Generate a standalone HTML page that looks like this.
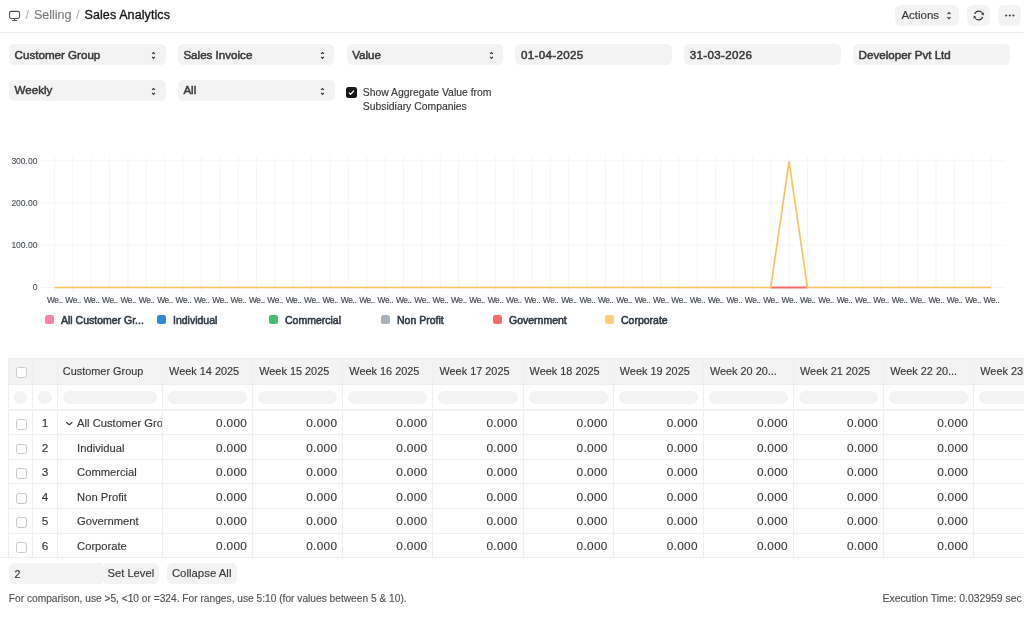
<!DOCTYPE html><html><head><meta charset="utf-8"><style>

*{box-sizing:border-box;margin:0;padding:0}
html,body{width:1024px;height:624px;overflow:hidden;background:#fff;font-family:"Liberation Sans", sans-serif;}
.abs{position:absolute;white-space:nowrap}
.inp{position:absolute;background:#f3f3f3;border-radius:5px;}
.t{position:absolute;white-space:nowrap;line-height:1;-webkit-text-stroke:0.15px currentColor}
.sb{-webkit-text-stroke:0.35px currentColor}

</style></head><body><div style="position:absolute;left:0;top:0;width:1024px;height:624px;will-change:transform">
<div class="abs" style="left:0;top:32px;width:1024px;height:1px;background:#ededed"></div>
<svg class="abs" style="left:0;top:0" width="30" height="30" viewBox="0 0 30 30" fill="none" stroke="#505050" stroke-width="1.05" stroke-linecap="round">
<rect x="9.5" y="11.35" width="10.05" height="7.1" rx="1.6"/><path d="M14.55 18.7V20.2M12.5 20.4H16.7"/></svg>
<div class="t" style="left:25.50px;top:9px;font-size:12.8px;color:#b8b8b8;">/</div>
<div class="t" style="left:34.00px;top:9px;font-size:12.5px;color:#7c7c7c;">Selling</div>
<div class="t" style="left:76.00px;top:9px;font-size:12.8px;color:#b8b8b8;">/</div>
<div class="t" style="left:84.50px;top:9px;font-size:12.5px;color:#171717;-webkit-text-stroke:0.35px #171717;letter-spacing:0.1px">Sales Analytics</div>
<div class="inp" style="left:895.2px;top:5.2px;width:63.6px;height:20.6px;border-radius:6px"></div>
<div class="t" style="left:901.40px;top:10px;font-size:11.5px;color:#383838;">Actions</div>
<svg class="abs" style="left:944.9px;top:11px" width="8" height="9" viewBox="0 0 8 9" fill="none" stroke="#383838" stroke-width="1.2"><path d="M2.5 3.1L4 1.6L5.5 3.1M2.5 6.2L4 7.7L5.5 6.2"/></svg>
<div class="inp" style="left:967px;top:5.2px;width:23.3px;height:20.6px;border-radius:6px"></div>
<svg class="abs" style="left:972px;top:9.3px" width="14" height="13" viewBox="0 0 14 13" fill="none" stroke="#383838" stroke-width="1.05"><path d="M2.57 5.00A4.4 4.4 0 0 1 10.69 4.64M10.83 8.00A4.4 4.4 0 0 1 2.71 8.36"/><path d="M11.53 6.45L12.06 3.56L8.98 5.00Z M1.87 6.55L1.34 9.44L4.42 8.00Z" fill="#383838" stroke="none"/></svg>
<div class="inp" style="left:998.1px;top:5.2px;width:23.1px;height:20.6px;border-radius:6px"></div>
<svg class="abs" style="left:1000px;top:10px" width="20" height="11" viewBox="0 0 20 11"><circle cx="6.2" cy="5.5" r="1.05" fill="#383838"/><circle cx="9.8" cy="5.5" r="1.05" fill="#383838"/><circle cx="13.4" cy="5.5" r="1.05" fill="#383838"/></svg>
<div class="inp" style="left:9.00px;top:44.1px;width:156.5px;height:20.9px"></div>
<div class="t" style="left:14.60px;top:49px;font-size:11.6px;color:#383838;-webkit-text-stroke:0.5px #383838">Customer Group</div>
<svg class="abs" style="left:150.00px;top:50.2px" width="8" height="10" viewBox="0 0 8 10" fill="none" stroke="#383838" stroke-width="1.2"><path d="M2.1 3.9L3.5 2.5L4.9 3.9M2.1 6.9L3.5 8.3L4.9 6.9"/></svg>
<div class="inp" style="left:177.80px;top:44.1px;width:156.5px;height:20.9px"></div>
<div class="t" style="left:183.40px;top:49px;font-size:11.6px;color:#383838;-webkit-text-stroke:0.5px #383838">Sales Invoice</div>
<svg class="abs" style="left:318.80px;top:50.2px" width="8" height="10" viewBox="0 0 8 10" fill="none" stroke="#383838" stroke-width="1.2"><path d="M2.1 3.9L3.5 2.5L4.9 3.9M2.1 6.9L3.5 8.3L4.9 6.9"/></svg>
<div class="inp" style="left:346.60px;top:44.1px;width:156.5px;height:20.9px"></div>
<div class="t" style="left:352.20px;top:49px;font-size:11.6px;color:#383838;-webkit-text-stroke:0.5px #383838">Value</div>
<svg class="abs" style="left:487.60px;top:50.2px" width="8" height="10" viewBox="0 0 8 10" fill="none" stroke="#383838" stroke-width="1.2"><path d="M2.1 3.9L3.5 2.5L4.9 3.9M2.1 6.9L3.5 8.3L4.9 6.9"/></svg>
<div class="inp" style="left:515.40px;top:44.1px;width:156.5px;height:20.9px"></div>
<div class="t" style="left:521.00px;top:49px;font-size:11.6px;color:#383838;-webkit-text-stroke:0.5px #383838;letter-spacing:0.33px">01-04-2025</div>
<div class="inp" style="left:684.20px;top:44.1px;width:156.5px;height:20.9px"></div>
<div class="t" style="left:689.80px;top:49px;font-size:11.6px;color:#383838;-webkit-text-stroke:0.5px #383838;letter-spacing:0.33px">31-03-2026</div>
<div class="inp" style="left:853.00px;top:44.1px;width:156.5px;height:20.9px"></div>
<div class="t" style="left:858.60px;top:49px;font-size:11.6px;color:#383838;-webkit-text-stroke:0.5px #383838">Developer Pvt Ltd</div>
<div class="inp" style="left:9.00px;top:80px;width:157px;height:20.5px"></div>
<div class="t" style="left:14.60px;top:84px;font-size:11.6px;color:#383838;-webkit-text-stroke:0.5px #383838">Weekly</div>
<svg class="abs" style="left:150.00px;top:85.8px" width="8" height="10" viewBox="0 0 8 10" fill="none" stroke="#383838" stroke-width="1.2"><path d="M2.1 3.9L3.5 2.5L4.9 3.9M2.1 6.9L3.5 8.3L4.9 6.9"/></svg>
<div class="inp" style="left:177.80px;top:80px;width:157px;height:20.5px"></div>
<div class="t" style="left:183.40px;top:84px;font-size:11.6px;color:#383838;-webkit-text-stroke:0.5px #383838">All</div>
<svg class="abs" style="left:318.80px;top:85.8px" width="8" height="10" viewBox="0 0 8 10" fill="none" stroke="#383838" stroke-width="1.2"><path d="M2.1 3.9L3.5 2.5L4.9 3.9M2.1 6.9L3.5 8.3L4.9 6.9"/></svg>
<div class="abs" style="left:346.2px;top:87.1px;width:10.5px;height:10.5px;border-radius:2.5px;background:#171717"></div>
<svg class="abs" style="left:346.2px;top:87.1px" width="11" height="11" viewBox="0 0 11 11" fill="none" stroke="#fff" stroke-width="1.3"><path d="M3 5.6L4.6 7.2L8 3.6"/></svg>
<div class="t" style="left:362.80px;top:88px;font-size:10.4px;color:#383838;">Show Aggregate Value from</div>
<div class="t" style="left:362.80px;top:102px;font-size:10.4px;color:#383838;">Subsidiary Companies</div>
<svg class="abs" style="left:0;top:0" width="1024" height="340" viewBox="0 0 1024 340"><line x1="41" y1="287.5" x2="1004.5" y2="287.5" stroke="#f4f5f6" stroke-width="1"/><line x1="41" y1="245.27" x2="1004.5" y2="245.27" stroke="#f4f5f6" stroke-width="1"/><line x1="41" y1="203.04000000000002" x2="1004.5" y2="203.04000000000002" stroke="#f4f5f6" stroke-width="1"/><line x1="41" y1="160.81" x2="1004.5" y2="160.81" stroke="#f4f5f6" stroke-width="1"/><line x1="54.50" y1="156.3" x2="54.50" y2="291.5" stroke="#f4f5f6" stroke-width="1"/><line x1="72.86" y1="156.3" x2="72.86" y2="291.5" stroke="#f4f5f6" stroke-width="1"/><line x1="91.23" y1="156.3" x2="91.23" y2="291.5" stroke="#f4f5f6" stroke-width="1"/><line x1="109.59" y1="156.3" x2="109.59" y2="291.5" stroke="#f4f5f6" stroke-width="1"/><line x1="127.96" y1="156.3" x2="127.96" y2="291.5" stroke="#f4f5f6" stroke-width="1"/><line x1="146.32" y1="156.3" x2="146.32" y2="291.5" stroke="#f4f5f6" stroke-width="1"/><line x1="164.69" y1="156.3" x2="164.69" y2="291.5" stroke="#f4f5f6" stroke-width="1"/><line x1="183.05" y1="156.3" x2="183.05" y2="291.5" stroke="#f4f5f6" stroke-width="1"/><line x1="201.42" y1="156.3" x2="201.42" y2="291.5" stroke="#f4f5f6" stroke-width="1"/><line x1="219.78" y1="156.3" x2="219.78" y2="291.5" stroke="#f4f5f6" stroke-width="1"/><line x1="238.15" y1="156.3" x2="238.15" y2="291.5" stroke="#f4f5f6" stroke-width="1"/><line x1="256.51" y1="156.3" x2="256.51" y2="291.5" stroke="#f4f5f6" stroke-width="1"/><line x1="274.88" y1="156.3" x2="274.88" y2="291.5" stroke="#f4f5f6" stroke-width="1"/><line x1="293.24" y1="156.3" x2="293.24" y2="291.5" stroke="#f4f5f6" stroke-width="1"/><line x1="311.61" y1="156.3" x2="311.61" y2="291.5" stroke="#f4f5f6" stroke-width="1"/><line x1="329.97" y1="156.3" x2="329.97" y2="291.5" stroke="#f4f5f6" stroke-width="1"/><line x1="348.34" y1="156.3" x2="348.34" y2="291.5" stroke="#f4f5f6" stroke-width="1"/><line x1="366.70" y1="156.3" x2="366.70" y2="291.5" stroke="#f4f5f6" stroke-width="1"/><line x1="385.06" y1="156.3" x2="385.06" y2="291.5" stroke="#f4f5f6" stroke-width="1"/><line x1="403.43" y1="156.3" x2="403.43" y2="291.5" stroke="#f4f5f6" stroke-width="1"/><line x1="421.79" y1="156.3" x2="421.79" y2="291.5" stroke="#f4f5f6" stroke-width="1"/><line x1="440.16" y1="156.3" x2="440.16" y2="291.5" stroke="#f4f5f6" stroke-width="1"/><line x1="458.52" y1="156.3" x2="458.52" y2="291.5" stroke="#f4f5f6" stroke-width="1"/><line x1="476.89" y1="156.3" x2="476.89" y2="291.5" stroke="#f4f5f6" stroke-width="1"/><line x1="495.25" y1="156.3" x2="495.25" y2="291.5" stroke="#f4f5f6" stroke-width="1"/><line x1="513.62" y1="156.3" x2="513.62" y2="291.5" stroke="#f4f5f6" stroke-width="1"/><line x1="531.98" y1="156.3" x2="531.98" y2="291.5" stroke="#f4f5f6" stroke-width="1"/><line x1="550.35" y1="156.3" x2="550.35" y2="291.5" stroke="#f4f5f6" stroke-width="1"/><line x1="568.71" y1="156.3" x2="568.71" y2="291.5" stroke="#f4f5f6" stroke-width="1"/><line x1="587.08" y1="156.3" x2="587.08" y2="291.5" stroke="#f4f5f6" stroke-width="1"/><line x1="605.44" y1="156.3" x2="605.44" y2="291.5" stroke="#f4f5f6" stroke-width="1"/><line x1="623.81" y1="156.3" x2="623.81" y2="291.5" stroke="#f4f5f6" stroke-width="1"/><line x1="642.17" y1="156.3" x2="642.17" y2="291.5" stroke="#f4f5f6" stroke-width="1"/><line x1="660.54" y1="156.3" x2="660.54" y2="291.5" stroke="#f4f5f6" stroke-width="1"/><line x1="678.90" y1="156.3" x2="678.90" y2="291.5" stroke="#f4f5f6" stroke-width="1"/><line x1="697.26" y1="156.3" x2="697.26" y2="291.5" stroke="#f4f5f6" stroke-width="1"/><line x1="715.63" y1="156.3" x2="715.63" y2="291.5" stroke="#f4f5f6" stroke-width="1"/><line x1="733.99" y1="156.3" x2="733.99" y2="291.5" stroke="#f4f5f6" stroke-width="1"/><line x1="752.36" y1="156.3" x2="752.36" y2="291.5" stroke="#f4f5f6" stroke-width="1"/><line x1="770.72" y1="156.3" x2="770.72" y2="291.5" stroke="#f4f5f6" stroke-width="1"/><line x1="789.09" y1="156.3" x2="789.09" y2="291.5" stroke="#f4f5f6" stroke-width="1"/><line x1="807.45" y1="156.3" x2="807.45" y2="291.5" stroke="#f4f5f6" stroke-width="1"/><line x1="825.82" y1="156.3" x2="825.82" y2="291.5" stroke="#f4f5f6" stroke-width="1"/><line x1="844.18" y1="156.3" x2="844.18" y2="291.5" stroke="#f4f5f6" stroke-width="1"/><line x1="862.55" y1="156.3" x2="862.55" y2="291.5" stroke="#f4f5f6" stroke-width="1"/><line x1="880.91" y1="156.3" x2="880.91" y2="291.5" stroke="#f4f5f6" stroke-width="1"/><line x1="899.28" y1="156.3" x2="899.28" y2="291.5" stroke="#f4f5f6" stroke-width="1"/><line x1="917.64" y1="156.3" x2="917.64" y2="291.5" stroke="#f4f5f6" stroke-width="1"/><line x1="936.01" y1="156.3" x2="936.01" y2="291.5" stroke="#f4f5f6" stroke-width="1"/><line x1="954.37" y1="156.3" x2="954.37" y2="291.5" stroke="#f4f5f6" stroke-width="1"/><line x1="972.74" y1="156.3" x2="972.74" y2="291.5" stroke="#f4f5f6" stroke-width="1"/><line x1="991.10" y1="156.3" x2="991.10" y2="291.5" stroke="#f4f5f6" stroke-width="1"/><text x="37.4" y="290.45" text-anchor="end" font-family="Liberation Sans" font-size="8.5" fill="#4a5057" stroke="#4a5057" stroke-width="0.12">0</text><text x="37.4" y="248.22" text-anchor="end" font-family="Liberation Sans" font-size="8.5" fill="#4a5057" stroke="#4a5057" stroke-width="0.12">100.00</text><text x="37.4" y="205.99" text-anchor="end" font-family="Liberation Sans" font-size="8.5" fill="#4a5057" stroke="#4a5057" stroke-width="0.12">200.00</text><text x="37.4" y="163.76" text-anchor="end" font-family="Liberation Sans" font-size="8.5" fill="#4a5057" stroke="#4a5057" stroke-width="0.12">300.00</text><text x="54.80" y="302.7" text-anchor="middle" font-family="Liberation Sans" font-size="8.4" letter-spacing="-0.35" fill="#40464d" stroke="#40464d" stroke-width="0.15">We..</text><text x="73.16" y="302.7" text-anchor="middle" font-family="Liberation Sans" font-size="8.4" letter-spacing="-0.35" fill="#40464d" stroke="#40464d" stroke-width="0.15">We..</text><text x="91.53" y="302.7" text-anchor="middle" font-family="Liberation Sans" font-size="8.4" letter-spacing="-0.35" fill="#40464d" stroke="#40464d" stroke-width="0.15">We..</text><text x="109.89" y="302.7" text-anchor="middle" font-family="Liberation Sans" font-size="8.4" letter-spacing="-0.35" fill="#40464d" stroke="#40464d" stroke-width="0.15">We..</text><text x="128.26" y="302.7" text-anchor="middle" font-family="Liberation Sans" font-size="8.4" letter-spacing="-0.35" fill="#40464d" stroke="#40464d" stroke-width="0.15">We..</text><text x="146.62" y="302.7" text-anchor="middle" font-family="Liberation Sans" font-size="8.4" letter-spacing="-0.35" fill="#40464d" stroke="#40464d" stroke-width="0.15">We..</text><text x="164.99" y="302.7" text-anchor="middle" font-family="Liberation Sans" font-size="8.4" letter-spacing="-0.35" fill="#40464d" stroke="#40464d" stroke-width="0.15">We..</text><text x="183.35" y="302.7" text-anchor="middle" font-family="Liberation Sans" font-size="8.4" letter-spacing="-0.35" fill="#40464d" stroke="#40464d" stroke-width="0.15">We..</text><text x="201.72" y="302.7" text-anchor="middle" font-family="Liberation Sans" font-size="8.4" letter-spacing="-0.35" fill="#40464d" stroke="#40464d" stroke-width="0.15">We..</text><text x="220.08" y="302.7" text-anchor="middle" font-family="Liberation Sans" font-size="8.4" letter-spacing="-0.35" fill="#40464d" stroke="#40464d" stroke-width="0.15">We..</text><text x="238.45" y="302.7" text-anchor="middle" font-family="Liberation Sans" font-size="8.4" letter-spacing="-0.35" fill="#40464d" stroke="#40464d" stroke-width="0.15">We..</text><text x="256.81" y="302.7" text-anchor="middle" font-family="Liberation Sans" font-size="8.4" letter-spacing="-0.35" fill="#40464d" stroke="#40464d" stroke-width="0.15">We..</text><text x="275.18" y="302.7" text-anchor="middle" font-family="Liberation Sans" font-size="8.4" letter-spacing="-0.35" fill="#40464d" stroke="#40464d" stroke-width="0.15">We..</text><text x="293.54" y="302.7" text-anchor="middle" font-family="Liberation Sans" font-size="8.4" letter-spacing="-0.35" fill="#40464d" stroke="#40464d" stroke-width="0.15">We..</text><text x="311.91" y="302.7" text-anchor="middle" font-family="Liberation Sans" font-size="8.4" letter-spacing="-0.35" fill="#40464d" stroke="#40464d" stroke-width="0.15">We..</text><text x="330.27" y="302.7" text-anchor="middle" font-family="Liberation Sans" font-size="8.4" letter-spacing="-0.35" fill="#40464d" stroke="#40464d" stroke-width="0.15">We..</text><text x="348.64" y="302.7" text-anchor="middle" font-family="Liberation Sans" font-size="8.4" letter-spacing="-0.35" fill="#40464d" stroke="#40464d" stroke-width="0.15">We..</text><text x="367.00" y="302.7" text-anchor="middle" font-family="Liberation Sans" font-size="8.4" letter-spacing="-0.35" fill="#40464d" stroke="#40464d" stroke-width="0.15">We..</text><text x="385.36" y="302.7" text-anchor="middle" font-family="Liberation Sans" font-size="8.4" letter-spacing="-0.35" fill="#40464d" stroke="#40464d" stroke-width="0.15">We..</text><text x="403.73" y="302.7" text-anchor="middle" font-family="Liberation Sans" font-size="8.4" letter-spacing="-0.35" fill="#40464d" stroke="#40464d" stroke-width="0.15">We..</text><text x="422.09" y="302.7" text-anchor="middle" font-family="Liberation Sans" font-size="8.4" letter-spacing="-0.35" fill="#40464d" stroke="#40464d" stroke-width="0.15">We..</text><text x="440.46" y="302.7" text-anchor="middle" font-family="Liberation Sans" font-size="8.4" letter-spacing="-0.35" fill="#40464d" stroke="#40464d" stroke-width="0.15">We..</text><text x="458.82" y="302.7" text-anchor="middle" font-family="Liberation Sans" font-size="8.4" letter-spacing="-0.35" fill="#40464d" stroke="#40464d" stroke-width="0.15">We..</text><text x="477.19" y="302.7" text-anchor="middle" font-family="Liberation Sans" font-size="8.4" letter-spacing="-0.35" fill="#40464d" stroke="#40464d" stroke-width="0.15">We..</text><text x="495.55" y="302.7" text-anchor="middle" font-family="Liberation Sans" font-size="8.4" letter-spacing="-0.35" fill="#40464d" stroke="#40464d" stroke-width="0.15">We..</text><text x="513.92" y="302.7" text-anchor="middle" font-family="Liberation Sans" font-size="8.4" letter-spacing="-0.35" fill="#40464d" stroke="#40464d" stroke-width="0.15">We..</text><text x="532.28" y="302.7" text-anchor="middle" font-family="Liberation Sans" font-size="8.4" letter-spacing="-0.35" fill="#40464d" stroke="#40464d" stroke-width="0.15">We..</text><text x="550.65" y="302.7" text-anchor="middle" font-family="Liberation Sans" font-size="8.4" letter-spacing="-0.35" fill="#40464d" stroke="#40464d" stroke-width="0.15">We..</text><text x="569.01" y="302.7" text-anchor="middle" font-family="Liberation Sans" font-size="8.4" letter-spacing="-0.35" fill="#40464d" stroke="#40464d" stroke-width="0.15">We..</text><text x="587.38" y="302.7" text-anchor="middle" font-family="Liberation Sans" font-size="8.4" letter-spacing="-0.35" fill="#40464d" stroke="#40464d" stroke-width="0.15">We..</text><text x="605.74" y="302.7" text-anchor="middle" font-family="Liberation Sans" font-size="8.4" letter-spacing="-0.35" fill="#40464d" stroke="#40464d" stroke-width="0.15">We..</text><text x="624.11" y="302.7" text-anchor="middle" font-family="Liberation Sans" font-size="8.4" letter-spacing="-0.35" fill="#40464d" stroke="#40464d" stroke-width="0.15">We..</text><text x="642.47" y="302.7" text-anchor="middle" font-family="Liberation Sans" font-size="8.4" letter-spacing="-0.35" fill="#40464d" stroke="#40464d" stroke-width="0.15">We..</text><text x="660.84" y="302.7" text-anchor="middle" font-family="Liberation Sans" font-size="8.4" letter-spacing="-0.35" fill="#40464d" stroke="#40464d" stroke-width="0.15">We..</text><text x="679.20" y="302.7" text-anchor="middle" font-family="Liberation Sans" font-size="8.4" letter-spacing="-0.35" fill="#40464d" stroke="#40464d" stroke-width="0.15">We..</text><text x="697.56" y="302.7" text-anchor="middle" font-family="Liberation Sans" font-size="8.4" letter-spacing="-0.35" fill="#40464d" stroke="#40464d" stroke-width="0.15">We..</text><text x="715.93" y="302.7" text-anchor="middle" font-family="Liberation Sans" font-size="8.4" letter-spacing="-0.35" fill="#40464d" stroke="#40464d" stroke-width="0.15">We..</text><text x="734.29" y="302.7" text-anchor="middle" font-family="Liberation Sans" font-size="8.4" letter-spacing="-0.35" fill="#40464d" stroke="#40464d" stroke-width="0.15">We..</text><text x="752.66" y="302.7" text-anchor="middle" font-family="Liberation Sans" font-size="8.4" letter-spacing="-0.35" fill="#40464d" stroke="#40464d" stroke-width="0.15">We..</text><text x="771.02" y="302.7" text-anchor="middle" font-family="Liberation Sans" font-size="8.4" letter-spacing="-0.35" fill="#40464d" stroke="#40464d" stroke-width="0.15">We..</text><text x="789.39" y="302.7" text-anchor="middle" font-family="Liberation Sans" font-size="8.4" letter-spacing="-0.35" fill="#40464d" stroke="#40464d" stroke-width="0.15">We..</text><text x="807.75" y="302.7" text-anchor="middle" font-family="Liberation Sans" font-size="8.4" letter-spacing="-0.35" fill="#40464d" stroke="#40464d" stroke-width="0.15">We..</text><text x="826.12" y="302.7" text-anchor="middle" font-family="Liberation Sans" font-size="8.4" letter-spacing="-0.35" fill="#40464d" stroke="#40464d" stroke-width="0.15">We..</text><text x="844.48" y="302.7" text-anchor="middle" font-family="Liberation Sans" font-size="8.4" letter-spacing="-0.35" fill="#40464d" stroke="#40464d" stroke-width="0.15">We..</text><text x="862.85" y="302.7" text-anchor="middle" font-family="Liberation Sans" font-size="8.4" letter-spacing="-0.35" fill="#40464d" stroke="#40464d" stroke-width="0.15">We..</text><text x="881.21" y="302.7" text-anchor="middle" font-family="Liberation Sans" font-size="8.4" letter-spacing="-0.35" fill="#40464d" stroke="#40464d" stroke-width="0.15">We..</text><text x="899.58" y="302.7" text-anchor="middle" font-family="Liberation Sans" font-size="8.4" letter-spacing="-0.35" fill="#40464d" stroke="#40464d" stroke-width="0.15">We..</text><text x="917.94" y="302.7" text-anchor="middle" font-family="Liberation Sans" font-size="8.4" letter-spacing="-0.35" fill="#40464d" stroke="#40464d" stroke-width="0.15">We..</text><text x="936.31" y="302.7" text-anchor="middle" font-family="Liberation Sans" font-size="8.4" letter-spacing="-0.35" fill="#40464d" stroke="#40464d" stroke-width="0.15">We..</text><text x="954.67" y="302.7" text-anchor="middle" font-family="Liberation Sans" font-size="8.4" letter-spacing="-0.35" fill="#40464d" stroke="#40464d" stroke-width="0.15">We..</text><text x="973.04" y="302.7" text-anchor="middle" font-family="Liberation Sans" font-size="8.4" letter-spacing="-0.35" fill="#40464d" stroke="#40464d" stroke-width="0.15">We..</text><text x="991.40" y="302.7" text-anchor="middle" font-family="Liberation Sans" font-size="8.4" letter-spacing="-0.35" fill="#40464d" stroke="#40464d" stroke-width="0.15">We..</text><line x1="770.72" y1="287.5" x2="807.45" y2="287.5" stroke="#f56b6b" stroke-width="1.8"/><polyline points="54.5,287.5 770.72,287.5 789.09,161.51 807.45,287.5 991.10,287.5" fill="none" stroke="#fcc25c" stroke-width="1.7" stroke-linejoin="round"/></svg>
<div class="abs" style="left:44.90px;top:315.2px;width:8.7px;height:8.8px;border-radius:2.5px;background:#f683ae"></div>
<div class="t" style="left:61.00px;top:315px;font-size:10.5px;color:#2e3843;-webkit-text-stroke:0.55px #2e3843">All Customer Gr...</div>
<div class="abs" style="left:156.90px;top:315.2px;width:8.7px;height:8.8px;border-radius:2.5px;background:#318ad8"></div>
<div class="t" style="left:173.00px;top:315px;font-size:10.5px;color:#2e3843;-webkit-text-stroke:0.55px #2e3843">Individual</div>
<div class="abs" style="left:268.90px;top:315.2px;width:8.7px;height:8.8px;border-radius:2.5px;background:#48bb74"></div>
<div class="t" style="left:285.00px;top:315px;font-size:10.5px;color:#2e3843;-webkit-text-stroke:0.55px #2e3843">Commercial</div>
<div class="abs" style="left:380.90px;top:315.2px;width:8.7px;height:8.8px;border-radius:2.5px;background:#a6b1b9"></div>
<div class="t" style="left:397.00px;top:315px;font-size:10.5px;color:#2e3843;-webkit-text-stroke:0.55px #2e3843">Non Profit</div>
<div class="abs" style="left:492.90px;top:315.2px;width:8.7px;height:8.8px;border-radius:2.5px;background:#f56b6b"></div>
<div class="t" style="left:509.00px;top:315px;font-size:10.5px;color:#2e3843;-webkit-text-stroke:0.55px #2e3843">Government</div>
<div class="abs" style="left:604.90px;top:315.2px;width:8.7px;height:8.8px;border-radius:2.5px;background:#facf7a"></div>
<div class="t" style="left:621.00px;top:315px;font-size:10.5px;color:#2e3843;-webkit-text-stroke:0.55px #2e3843">Corporate</div>
<div class="abs" style="left:8px;top:358px;width:1016px;height:26px;background:#f3f3f3"></div>
<div class="abs" style="left:8px;top:357.50px;width:1016px;height:1px;background:#efefef"></div>
<div class="abs" style="left:8px;top:383.50px;width:1016px;height:1px;background:#efefef"></div>
<div class="abs" style="left:8px;top:434.27px;width:1016px;height:1px;background:#efefef"></div>
<div class="abs" style="left:8px;top:458.84px;width:1016px;height:1px;background:#efefef"></div>
<div class="abs" style="left:8px;top:483.41px;width:1016px;height:1px;background:#efefef"></div>
<div class="abs" style="left:8px;top:507.98px;width:1016px;height:1px;background:#efefef"></div>
<div class="abs" style="left:8px;top:532.55px;width:1016px;height:1px;background:#efefef"></div>
<div class="abs" style="left:0px;top:557.12px;width:1024px;height:1px;background:#efefef"></div>
<div class="abs" style="left:8px;top:408.6px;width:1016px;height:2.2px;background:#f2f2f2"></div>
<div class="abs" style="left:7.50px;top:358px;width:1px;height:49.60px;background:#efefef"></div>
<div class="abs" style="left:7.50px;top:410.8px;width:1px;height:146.82px;background:#efefef"></div>
<div class="abs" style="left:31.70px;top:358px;width:1px;height:49.60px;background:#efefef"></div>
<div class="abs" style="left:31.70px;top:410.8px;width:1px;height:146.82px;background:#efefef"></div>
<div class="abs" style="left:57.20px;top:358px;width:1px;height:49.60px;background:#efefef"></div>
<div class="abs" style="left:57.20px;top:410.8px;width:1px;height:146.82px;background:#efefef"></div>
<div class="abs" style="left:162.10px;top:358px;width:1px;height:49.60px;background:#efefef"></div>
<div class="abs" style="left:162.10px;top:410.8px;width:1px;height:146.82px;background:#efefef"></div>
<div class="abs" style="left:252.23px;top:358px;width:1px;height:49.60px;background:#efefef"></div>
<div class="abs" style="left:252.23px;top:410.8px;width:1px;height:146.82px;background:#efefef"></div>
<div class="abs" style="left:342.36px;top:358px;width:1px;height:49.60px;background:#efefef"></div>
<div class="abs" style="left:342.36px;top:410.8px;width:1px;height:146.82px;background:#efefef"></div>
<div class="abs" style="left:432.49px;top:358px;width:1px;height:49.60px;background:#efefef"></div>
<div class="abs" style="left:432.49px;top:410.8px;width:1px;height:146.82px;background:#efefef"></div>
<div class="abs" style="left:522.62px;top:358px;width:1px;height:49.60px;background:#efefef"></div>
<div class="abs" style="left:522.62px;top:410.8px;width:1px;height:146.82px;background:#efefef"></div>
<div class="abs" style="left:612.75px;top:358px;width:1px;height:49.60px;background:#efefef"></div>
<div class="abs" style="left:612.75px;top:410.8px;width:1px;height:146.82px;background:#efefef"></div>
<div class="abs" style="left:702.88px;top:358px;width:1px;height:49.60px;background:#efefef"></div>
<div class="abs" style="left:702.88px;top:410.8px;width:1px;height:146.82px;background:#efefef"></div>
<div class="abs" style="left:793.01px;top:358px;width:1px;height:49.60px;background:#efefef"></div>
<div class="abs" style="left:793.01px;top:410.8px;width:1px;height:146.82px;background:#efefef"></div>
<div class="abs" style="left:883.14px;top:358px;width:1px;height:49.60px;background:#efefef"></div>
<div class="abs" style="left:883.14px;top:410.8px;width:1px;height:146.82px;background:#efefef"></div>
<div class="abs" style="left:973.27px;top:358px;width:1px;height:49.60px;background:#efefef"></div>
<div class="abs" style="left:973.27px;top:410.8px;width:1px;height:146.82px;background:#efefef"></div>
<div class="abs" style="left:16px;top:367.00px;width:10.6px;height:10.6px;border-radius:2.5px;border:1px solid #c8c8c8;background:#fff"></div>
<div class="t" style="left:62.80px;top:366px;font-size:10.9px;color:#383838;">Customer Group</div>
<div class="t" style="left:169.10px;top:366px;font-size:10.9px;color:#383838;">Week 14 2025</div>
<div class="t" style="left:259.23px;top:366px;font-size:10.9px;color:#383838;">Week 15 2025</div>
<div class="t" style="left:349.36px;top:366px;font-size:10.9px;color:#383838;">Week 16 2025</div>
<div class="t" style="left:439.49px;top:366px;font-size:10.9px;color:#383838;">Week 17 2025</div>
<div class="t" style="left:529.62px;top:366px;font-size:10.9px;color:#383838;">Week 18 2025</div>
<div class="t" style="left:619.75px;top:366px;font-size:10.9px;color:#383838;">Week 19 2025</div>
<div class="t" style="left:709.88px;top:366px;font-size:10.9px;color:#383838;">Week 20 20...</div>
<div class="t" style="left:800.01px;top:366px;font-size:10.9px;color:#383838;">Week 21 2025</div>
<div class="t" style="left:890.14px;top:366px;font-size:10.9px;color:#383838;">Week 22 20...</div>
<div class="t" style="left:980.27px;top:366px;font-size:10.9px;color:#383838;">Week 23 2025</div>
<div class="abs" style="left:13.7px;top:390.8px;width:13.6px;height:13.4px;border-radius:7px;background:#f3f3f3"></div>
<div class="abs" style="left:38.2px;top:390.8px;width:13.6px;height:13.4px;border-radius:7px;background:#f3f3f3"></div>
<div class="abs" style="left:63.20px;top:390.8px;width:93.90px;height:13.2px;border-radius:7px;background:#f3f3f3"></div>
<div class="abs" style="left:168.10px;top:390.8px;width:79.13px;height:13.2px;border-radius:7px;background:#f3f3f3"></div>
<div class="abs" style="left:258.23px;top:390.8px;width:79.13px;height:13.2px;border-radius:7px;background:#f3f3f3"></div>
<div class="abs" style="left:348.36px;top:390.8px;width:79.13px;height:13.2px;border-radius:7px;background:#f3f3f3"></div>
<div class="abs" style="left:438.49px;top:390.8px;width:79.13px;height:13.2px;border-radius:7px;background:#f3f3f3"></div>
<div class="abs" style="left:528.62px;top:390.8px;width:79.13px;height:13.2px;border-radius:7px;background:#f3f3f3"></div>
<div class="abs" style="left:618.75px;top:390.8px;width:79.13px;height:13.2px;border-radius:7px;background:#f3f3f3"></div>
<div class="abs" style="left:708.88px;top:390.8px;width:79.13px;height:13.2px;border-radius:7px;background:#f3f3f3"></div>
<div class="abs" style="left:799.01px;top:390.8px;width:79.13px;height:13.2px;border-radius:7px;background:#f3f3f3"></div>
<div class="abs" style="left:889.14px;top:390.8px;width:79.13px;height:13.2px;border-radius:7px;background:#f3f3f3"></div>
<div class="abs" style="left:979.27px;top:390.8px;width:79.13px;height:13.2px;border-radius:7px;background:#f3f3f3"></div>
<div class="abs" style="left:16px;top:419.20px;width:10.6px;height:10.6px;border-radius:2.5px;border:1px solid #c8c8c8;background:#fff"></div>
<div class="t" style="left:32.2px;width:25.5px;text-align:center;top:418px;font-size:11.8px;color:#383838">1</div>
<svg class="abs" style="left:64.5px;top:420.90px" width="9" height="6" viewBox="0 0 9 6" fill="none" stroke="#383838" stroke-width="1.15"><path d="M1.3 1.2L4.3 3.8L7.3 1.2"/></svg>
<div class="abs" style="left:77.1px;top:418px;width:85.2px;overflow:hidden;font-size:11.2px;line-height:1;color:#383838;-webkit-text-stroke:0.15px #383838">All Customer Gro</div>
<div class="t" style="left:183.13px;width:64px;text-align:right;top:418px;font-size:11.8px;letter-spacing:0.3px;color:#383838">0.000</div>
<div class="t" style="left:273.26px;width:64px;text-align:right;top:418px;font-size:11.8px;letter-spacing:0.3px;color:#383838">0.000</div>
<div class="t" style="left:363.39px;width:64px;text-align:right;top:418px;font-size:11.8px;letter-spacing:0.3px;color:#383838">0.000</div>
<div class="t" style="left:453.52px;width:64px;text-align:right;top:418px;font-size:11.8px;letter-spacing:0.3px;color:#383838">0.000</div>
<div class="t" style="left:543.65px;width:64px;text-align:right;top:418px;font-size:11.8px;letter-spacing:0.3px;color:#383838">0.000</div>
<div class="t" style="left:633.78px;width:64px;text-align:right;top:418px;font-size:11.8px;letter-spacing:0.3px;color:#383838">0.000</div>
<div class="t" style="left:723.91px;width:64px;text-align:right;top:418px;font-size:11.8px;letter-spacing:0.3px;color:#383838">0.000</div>
<div class="t" style="left:814.04px;width:64px;text-align:right;top:418px;font-size:11.8px;letter-spacing:0.3px;color:#383838">0.000</div>
<div class="t" style="left:904.17px;width:64px;text-align:right;top:418px;font-size:11.8px;letter-spacing:0.3px;color:#383838">0.000</div>
<div class="abs" style="left:16px;top:443.77px;width:10.6px;height:10.6px;border-radius:2.5px;border:1px solid #c8c8c8;background:#fff"></div>
<div class="t" style="left:32.2px;width:25.5px;text-align:center;top:443px;font-size:11.8px;color:#383838">2</div>
<div class="t" style="left:77.10px;top:443px;font-size:11.2px;color:#383838;">Individual</div>
<div class="t" style="left:183.13px;width:64px;text-align:right;top:443px;font-size:11.8px;letter-spacing:0.3px;color:#383838">0.000</div>
<div class="t" style="left:273.26px;width:64px;text-align:right;top:443px;font-size:11.8px;letter-spacing:0.3px;color:#383838">0.000</div>
<div class="t" style="left:363.39px;width:64px;text-align:right;top:443px;font-size:11.8px;letter-spacing:0.3px;color:#383838">0.000</div>
<div class="t" style="left:453.52px;width:64px;text-align:right;top:443px;font-size:11.8px;letter-spacing:0.3px;color:#383838">0.000</div>
<div class="t" style="left:543.65px;width:64px;text-align:right;top:443px;font-size:11.8px;letter-spacing:0.3px;color:#383838">0.000</div>
<div class="t" style="left:633.78px;width:64px;text-align:right;top:443px;font-size:11.8px;letter-spacing:0.3px;color:#383838">0.000</div>
<div class="t" style="left:723.91px;width:64px;text-align:right;top:443px;font-size:11.8px;letter-spacing:0.3px;color:#383838">0.000</div>
<div class="t" style="left:814.04px;width:64px;text-align:right;top:443px;font-size:11.8px;letter-spacing:0.3px;color:#383838">0.000</div>
<div class="t" style="left:904.17px;width:64px;text-align:right;top:443px;font-size:11.8px;letter-spacing:0.3px;color:#383838">0.000</div>
<div class="abs" style="left:16px;top:468.34px;width:10.6px;height:10.6px;border-radius:2.5px;border:1px solid #c8c8c8;background:#fff"></div>
<div class="t" style="left:32.2px;width:25.5px;text-align:center;top:467px;font-size:11.8px;color:#383838">3</div>
<div class="t" style="left:77.10px;top:467px;font-size:11.2px;color:#383838;">Commercial</div>
<div class="t" style="left:183.13px;width:64px;text-align:right;top:467px;font-size:11.8px;letter-spacing:0.3px;color:#383838">0.000</div>
<div class="t" style="left:273.26px;width:64px;text-align:right;top:467px;font-size:11.8px;letter-spacing:0.3px;color:#383838">0.000</div>
<div class="t" style="left:363.39px;width:64px;text-align:right;top:467px;font-size:11.8px;letter-spacing:0.3px;color:#383838">0.000</div>
<div class="t" style="left:453.52px;width:64px;text-align:right;top:467px;font-size:11.8px;letter-spacing:0.3px;color:#383838">0.000</div>
<div class="t" style="left:543.65px;width:64px;text-align:right;top:467px;font-size:11.8px;letter-spacing:0.3px;color:#383838">0.000</div>
<div class="t" style="left:633.78px;width:64px;text-align:right;top:467px;font-size:11.8px;letter-spacing:0.3px;color:#383838">0.000</div>
<div class="t" style="left:723.91px;width:64px;text-align:right;top:467px;font-size:11.8px;letter-spacing:0.3px;color:#383838">0.000</div>
<div class="t" style="left:814.04px;width:64px;text-align:right;top:467px;font-size:11.8px;letter-spacing:0.3px;color:#383838">0.000</div>
<div class="t" style="left:904.17px;width:64px;text-align:right;top:467px;font-size:11.8px;letter-spacing:0.3px;color:#383838">0.000</div>
<div class="abs" style="left:16px;top:492.91px;width:10.6px;height:10.6px;border-radius:2.5px;border:1px solid #c8c8c8;background:#fff"></div>
<div class="t" style="left:32.2px;width:25.5px;text-align:center;top:492px;font-size:11.8px;color:#383838">4</div>
<div class="t" style="left:77.10px;top:492px;font-size:11.2px;color:#383838;">Non Profit</div>
<div class="t" style="left:183.13px;width:64px;text-align:right;top:492px;font-size:11.8px;letter-spacing:0.3px;color:#383838">0.000</div>
<div class="t" style="left:273.26px;width:64px;text-align:right;top:492px;font-size:11.8px;letter-spacing:0.3px;color:#383838">0.000</div>
<div class="t" style="left:363.39px;width:64px;text-align:right;top:492px;font-size:11.8px;letter-spacing:0.3px;color:#383838">0.000</div>
<div class="t" style="left:453.52px;width:64px;text-align:right;top:492px;font-size:11.8px;letter-spacing:0.3px;color:#383838">0.000</div>
<div class="t" style="left:543.65px;width:64px;text-align:right;top:492px;font-size:11.8px;letter-spacing:0.3px;color:#383838">0.000</div>
<div class="t" style="left:633.78px;width:64px;text-align:right;top:492px;font-size:11.8px;letter-spacing:0.3px;color:#383838">0.000</div>
<div class="t" style="left:723.91px;width:64px;text-align:right;top:492px;font-size:11.8px;letter-spacing:0.3px;color:#383838">0.000</div>
<div class="t" style="left:814.04px;width:64px;text-align:right;top:492px;font-size:11.8px;letter-spacing:0.3px;color:#383838">0.000</div>
<div class="t" style="left:904.17px;width:64px;text-align:right;top:492px;font-size:11.8px;letter-spacing:0.3px;color:#383838">0.000</div>
<div class="abs" style="left:16px;top:517.48px;width:10.6px;height:10.6px;border-radius:2.5px;border:1px solid #c8c8c8;background:#fff"></div>
<div class="t" style="left:32.2px;width:25.5px;text-align:center;top:516px;font-size:11.8px;color:#383838">5</div>
<div class="t" style="left:77.10px;top:516px;font-size:11.2px;color:#383838;">Government</div>
<div class="t" style="left:183.13px;width:64px;text-align:right;top:516px;font-size:11.8px;letter-spacing:0.3px;color:#383838">0.000</div>
<div class="t" style="left:273.26px;width:64px;text-align:right;top:516px;font-size:11.8px;letter-spacing:0.3px;color:#383838">0.000</div>
<div class="t" style="left:363.39px;width:64px;text-align:right;top:516px;font-size:11.8px;letter-spacing:0.3px;color:#383838">0.000</div>
<div class="t" style="left:453.52px;width:64px;text-align:right;top:516px;font-size:11.8px;letter-spacing:0.3px;color:#383838">0.000</div>
<div class="t" style="left:543.65px;width:64px;text-align:right;top:516px;font-size:11.8px;letter-spacing:0.3px;color:#383838">0.000</div>
<div class="t" style="left:633.78px;width:64px;text-align:right;top:516px;font-size:11.8px;letter-spacing:0.3px;color:#383838">0.000</div>
<div class="t" style="left:723.91px;width:64px;text-align:right;top:516px;font-size:11.8px;letter-spacing:0.3px;color:#383838">0.000</div>
<div class="t" style="left:814.04px;width:64px;text-align:right;top:516px;font-size:11.8px;letter-spacing:0.3px;color:#383838">0.000</div>
<div class="t" style="left:904.17px;width:64px;text-align:right;top:516px;font-size:11.8px;letter-spacing:0.3px;color:#383838">0.000</div>
<div class="abs" style="left:16px;top:542.05px;width:10.6px;height:10.6px;border-radius:2.5px;border:1px solid #c8c8c8;background:#fff"></div>
<div class="t" style="left:32.2px;width:25.5px;text-align:center;top:541px;font-size:11.8px;color:#383838">6</div>
<div class="t" style="left:77.10px;top:541px;font-size:11.2px;color:#383838;">Corporate</div>
<div class="t" style="left:183.13px;width:64px;text-align:right;top:541px;font-size:11.8px;letter-spacing:0.3px;color:#383838">0.000</div>
<div class="t" style="left:273.26px;width:64px;text-align:right;top:541px;font-size:11.8px;letter-spacing:0.3px;color:#383838">0.000</div>
<div class="t" style="left:363.39px;width:64px;text-align:right;top:541px;font-size:11.8px;letter-spacing:0.3px;color:#383838">0.000</div>
<div class="t" style="left:453.52px;width:64px;text-align:right;top:541px;font-size:11.8px;letter-spacing:0.3px;color:#383838">0.000</div>
<div class="t" style="left:543.65px;width:64px;text-align:right;top:541px;font-size:11.8px;letter-spacing:0.3px;color:#383838">0.000</div>
<div class="t" style="left:633.78px;width:64px;text-align:right;top:541px;font-size:11.8px;letter-spacing:0.3px;color:#383838">0.000</div>
<div class="t" style="left:723.91px;width:64px;text-align:right;top:541px;font-size:11.8px;letter-spacing:0.3px;color:#383838">0.000</div>
<div class="t" style="left:814.04px;width:64px;text-align:right;top:541px;font-size:11.8px;letter-spacing:0.3px;color:#383838">0.000</div>
<div class="t" style="left:904.17px;width:64px;text-align:right;top:541px;font-size:11.8px;letter-spacing:0.3px;color:#383838">0.000</div>
<div class="abs" style="left:8.8px;top:563.4px;width:92.8px;height:20.3px;border-radius:5px 0 0 5px;background:#f3f3f3"></div>
<div class="inp" style="left:102.3px;top:563.4px;width:56.4px;height:20.3px;border-radius:5px"></div>
<div class="t" style="left:14.60px;top:569px;font-size:10.6px;color:#383838;">2</div>
<div class="t" style="left:107.50px;top:568px;font-size:11.2px;color:#383838;">Set Level</div>
<div class="inp" style="left:166.8px;top:563.4px;width:70.6px;height:20.3px;border-radius:5px"></div>
<div class="t" style="left:171.90px;top:568px;font-size:11.4px;color:#383838;">Collapse All</div>
<div class="t" style="left:8.80px;top:594px;font-size:10.2px;color:#525252;">For comparison, use &gt;5, &lt;10 or =324. For ranges, use 5:10 (for values between 5 &amp; 10).</div>
<div class="t" style="left:882.50px;top:594px;font-size:10.4px;color:#525252;">Execution Time: 0.032959 sec</div>
</div></body></html>
